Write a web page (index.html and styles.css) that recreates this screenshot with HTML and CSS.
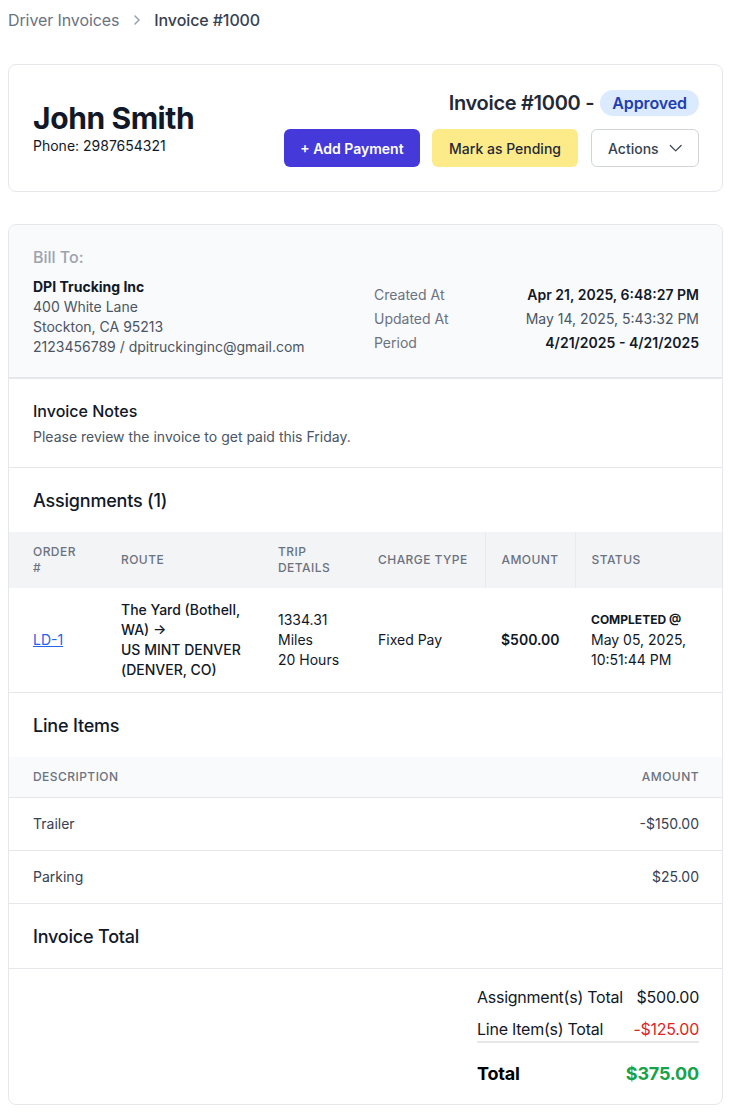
FILE: index.html
```html
<!DOCTYPE html>
<html>
<head>
<meta charset="utf-8">
<link rel="stylesheet" href="styles.css">
</head>
<body>
<nav class="crumbs">
  <span class="crumb-link">Driver Invoices</span>
  <svg class="crumb-sep" width="8" height="12" viewBox="0 0 8 12"><path d="M2 2l4 4-4 4" fill="none" stroke="#9ca3af" stroke-width="1.6" stroke-linecap="round" stroke-linejoin="round"/></svg>
  <span class="crumb-current">Invoice #1000</span>
</nav>

<section class="card head-card">
  <div class="driver">
    <h1 class="driver-name">John Smith</h1>
    <div class="driver-phone">Phone: 2987654321</div>
  </div>
  <div class="head-right">
    <div class="inv-title">Invoice #1000 - <span class="badge">Approved</span></div>
    <div class="btns">
      <button class="btn btn-primary">+ Add Payment</button>
      <button class="btn btn-yellow">Mark as Pending</button>
      <button class="btn btn-outline">Actions
        <svg width="16" height="16" viewBox="0 0 16 16"><path d="M1.5 5l6.5 6.5 6.5-6.5" fill="none" stroke="#374151" stroke-width="1.4" stroke-linecap="round" stroke-linejoin="round"/></svg>
      </button>
    </div>
  </div>
</section>

<section class="card main-card">
  <div class="bill">
    <div class="bill-left">
      <div class="bill-label">Bill To:</div>
      <div class="bill-company">DPI Trucking Inc</div>
      <div class="bill-line">400 White Lane</div>
      <div class="bill-line">Stockton, CA 95213</div>
      <div class="bill-line">2123456789 / dpitruckinginc@gmail.com</div>
    </div>
    <div class="meta">
      <div class="meta-row"><span class="meta-key">Created At</span><span class="meta-val strong">Apr 21, 2025, 6:48:27 PM</span></div>
      <div class="meta-row"><span class="meta-key">Updated At</span><span class="meta-val">May 14, 2025, 5:43:32 PM</span></div>
      <div class="meta-row"><span class="meta-key">Period</span><span class="meta-val strong">4/21/2025 - 4/21/2025</span></div>
    </div>
  </div>

  <div class="notes">
    <h3 class="notes-title">Invoice Notes</h3>
    <p class="notes-text">Please review the invoice to get paid this Friday.</p>
  </div>

  <h2 class="sec-title">Assignments (1)</h2>
  <table class="atable">
    <colgroup>
      <col class="c1"><col class="c2"><col class="c3"><col class="c4"><col class="c5"><col class="c6">
    </colgroup>
    <thead>
      <tr>
        <th class="first">Order<br>#</th>
        <th>Route</th>
        <th>Trip<br>Details</th>
        <th class="nowrap">Charge Type</th>
        <th class="div">Amount</th>
        <th class="div">Status</th>
      </tr>
    </thead>
    <tbody>
      <tr>
        <td class="first"><a class="order-link" href="#">LD-1</a></td>
        <td class="route">The Yard (Bothell, WA) →<br>US MINT DENVER (DENVER, CO)</td>
        <td>1334.31<br>Miles<br>20 Hours</td>
        <td>Fixed Pay</td>
        <td class="amt">$500.00</td>
        <td><div class="status-tag">COMPLETED @</div>May 05, 2025,<br>10:51:44 PM</td>
      </tr>
    </tbody>
  </table>

  <h2 class="sec-title">Line Items</h2>
  <table class="ltable">
    <thead>
      <tr><th>Description</th><th class="right">Amount</th></tr>
    </thead>
    <tbody>
      <tr><td>Trailer</td><td class="right">-$150.00</td></tr>
      <tr><td>Parking</td><td class="right">$25.00</td></tr>
    </tbody>
  </table>

  <h2 class="sec-title bordered">Invoice Total</h2>
  <div class="totals-wrap">
    <div class="totals">
      <div class="trow"><span>Assignment(s) Total</span><span>$500.00</span></div>
      <div class="trow underline"><span>Line Item(s) Total</span><span class="neg">-$125.00</span></div>
      <div class="trow grand"><span>Total</span><span class="pos">$375.00</span></div>
    </div>
  </div>
</section>
</body>
</html>
```

FILE: styles.css
```css
* { box-sizing: border-box; }
body {
  margin: 8px 9px 8px 8px;
  font-family: Inter, "Noto Sans", Arial, sans-serif;
  color: #111827;
  background: #fff;
}
h1, h2, h3, p { margin: 0; }

.crumbs {
  display: flex;
  align-items: center;
  height: 24px;
  font-size: 16px;
  line-height: 24px;
  letter-spacing: -0.1px;
}
.crumb-link { color: #6b7280; }
.crumb-sep { margin: 0 13px 0 14px; }
.crumb-current { color: #374151; font-weight: 500; }

.card {
  border: 1px solid #e5e7eb;
  border-radius: 8px;
  background: #fff;
}
.head-card {
  margin-top: 32px;
  padding: 24px 23px 24px 24px;
  display: flex;
  justify-content: space-between;
  align-items: center;
}
.driver-name {
  font-size: 30px;
  line-height: 36px;
  font-weight: 700;
  letter-spacing: -0.4px;
  color: #111827;
}
.driver-phone { font-size: 14px; line-height: 20px; color: #111827; }
.head-right {
  display: flex;
  flex-direction: column;
  align-items: flex-end;
  gap: 12px;
}
.inv-title {
  font-size: 20px;
  line-height: 28px;
  font-weight: 600;
  letter-spacing: -0.3px;
  color: #1f2937;
  display: flex;
  align-items: center;
}
.badge {
  margin-left: 6px;
  background: #dbeafe;
  color: #1e40af;
  font-size: 16px;
  line-height: 26px;
  font-weight: 600;
  letter-spacing: -0.1px;
  padding: 0 12px;
  border-radius: 9999px;
}
.btns { display: flex; gap: 12px; }
.btn {
  font-family: inherit;
  height: 38px;
  border-radius: 6px;
  font-size: 14px;
  padding: 0 16px;
  border: none;
  cursor: pointer;
}
.btn-primary {
  background: #4639d9;
  color: #fff;
  font-weight: 600;
  width: 136px;
}
.btn-yellow {
  background: #fdeb8a;
  color: #1f2937;
  font-weight: 500;
  width: 146px;
}
.btn-outline {
  background: #fff;
  border: 1px solid #d1d5db;
  color: #374151;
  font-weight: 500;
  width: 108px;
  display: flex;
  align-items: center;
  justify-content: center;
  gap: 10px;
  margin-left: 1px;
}

.main-card { margin-top: 32px; overflow: hidden; }

.bill {
  background: #f9fafb;
  border-bottom: 2px solid #e5e7eb;
  padding: 20px 23px 20px 24px;
  display: flex;
  justify-content: space-between;
}
.bill-label { font-size: 16px; line-height: 24px; color: #9ca3af; font-weight: 500; margin-bottom: 8px; }
.bill-company { font-size: 14px; line-height: 20px; font-weight: 700; color: #111827; }
.bill-line { font-size: 14px; line-height: 20px; color: #4b5563; }
.meta {
  width: 325px;
  align-self: flex-end;
  margin-bottom: 2px;
}
.meta-row {
  display: flex;
  justify-content: space-between;
  font-size: 14px;
  line-height: 24px;
}
.meta-key { color: #6b7280; }
.meta-val { color: #4b5563; }
.meta-val.strong { color: #111827; font-weight: 600; }

.notes {
  padding: 20px 24px;
  border-bottom: 1px solid #e5e7eb;
}
.notes-title { font-size: 16px; line-height: 24px; font-weight: 500; color: #111827; }
.notes-text { margin-top: 4px; font-size: 14px; line-height: 20px; color: #4b5563; }

.sec-title {
  font-size: 18px;
  line-height: 28px;
  font-weight: 500;
  letter-spacing: -0.2px;
  color: #111827;
  padding: 19px 24px 17px;
}
.sec-title.bordered { border-bottom: 1px solid #e5e7eb; }

table { border-collapse: collapse; width: 100%; }
.atable { table-layout: fixed; border-bottom: 1px solid #e5e7eb; }
.c1 { width: 96px; }
.c2 { width: 157px; }
.c3 { width: 100px; }
.c4 { width: 123px; }
.c5 { width: 90px; }
.c6 { width: auto; }
.atable th {
  background: #f3f4f6;
  height: 56px;
  padding: 0 16px;
  text-align: left;
  font-size: 12px;
  line-height: 16px;
  font-weight: 500;
  letter-spacing: 0.45px;
  text-transform: uppercase;
  color: #6b7280;
}
.atable th.nowrap { white-space: nowrap; }
.atable th.div { border-left: 1px solid #e9eaee; }
.atable th.first, .atable td.first { padding-left: 24px; }
.atable td {
  padding: 12px 16px;
  font-size: 14px;
  line-height: 20px;
  color: #111827;
  vertical-align: middle;
}
.atable td.route { font-weight: 500; }
.atable td.amt { font-weight: 600; }
.order-link { color: #2563eb; text-decoration: underline; }
.status-tag { font-size: 12px; line-height: 20px; font-weight: 700; }

.ltable th {
  background: #f9fafb;
  height: 40px;
  padding: 0 23px 0 24px;
  text-align: left;
  font-size: 12px;
  line-height: 16px;
  font-weight: 500;
  letter-spacing: 0.45px;
  text-transform: uppercase;
  color: #6b7280;
  border-bottom: 1px solid #e5e7eb;
}
.ltable td {
  padding: 16px 23px 16px 24px;
  height: 53px;
  font-size: 14px;
  line-height: 20px;
  color: #374151;
  border-bottom: 1px solid #e5e7eb;
}
.ltable .right { text-align: right; }

.totals-wrap {
  display: flex;
  justify-content: flex-end;
  padding: 16px 23px 16px 24px;
}
.totals { width: 222px; }
.trow {
  display: flex;
  justify-content: space-between;
  font-size: 16px;
  line-height: 24px;
  letter-spacing: -0.25px;
  color: #111827;
}
.trow + .trow { margin-top: 8px; }
.trow.underline { border-bottom: 2px solid #e5e7eb; }
.trow.grand {
  margin-top: 17px;
  font-size: 18px;
  line-height: 28px;
  font-weight: 700;
  letter-spacing: -0.2px;
  color: #000;
}
.neg { color: #dc2626; }
.pos { color: #16a34a; }
```
